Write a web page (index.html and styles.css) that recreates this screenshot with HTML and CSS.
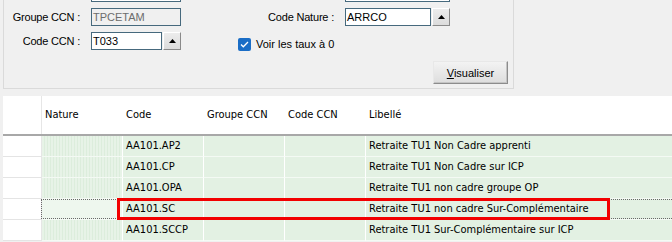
FILE: index.html
```html
<!DOCTYPE html>
<html lang="fr">
<head>
  <meta charset="UTF-8" />
  <title>Natures de cotisation</title>
  <link rel="stylesheet" href="styles.css">
</head>
<body>
  <div class="page">
    <!-- filtres -->
    <section class="panel">
      <div class="form">
        <span class="label"></span>
        <span class="field"></span>
        <span class="label"></span>
        <span class="field"></span>

        <span class="label">Groupe CCN :</span>
        <span class="field disabled">TPCETAM</span>
        <span class="label">Code Nature :</span>
        <span class="combo">
          <span class="field">ARRCO</span>
          <button class="drop"><svg width="7" height="4" viewBox="0 0 7 4"><polygon points="0,4 7,4 3.5,0" fill="#000"/></svg></button>
        </span>

        <span class="label">Code CCN :</span>
        <span class="combo">
          <span class="field">T033</span>
          <button class="drop"><svg width="7" height="4" viewBox="0 0 7 4"><polygon points="0,4 7,4 3.5,0" fill="#000"/></svg></button>
        </span>
        <label class="check">
          <span class="box"><svg width="9" height="7" viewBox="0 0 9 7"><polyline points="1,3.5 3.3,5.8 8,1" fill="none" stroke="#fff" stroke-width="1.3"/></svg></span>
          Voir les taux à 0
        </label>
      </div>
      <div class="actions">
        <button class="btn"><u>V</u>isualiser</button>
      </div>
    </section>

    <!-- liste -->
    <section class="grid">
      <div class="row head">
        <div class="cell ind"></div>
        <div class="cell">Nature</div>
        <div class="cell">Code</div>
        <div class="cell">Groupe CCN</div>
        <div class="cell">Code CCN</div>
        <div class="cell lib">Libellé</div>
      </div>
      <div class="row">
        <div class="cell ind"></div>
        <div class="cell nat"></div>
        <div class="cell">AA101.AP2</div>
        <div class="cell"></div>
        <div class="cell"></div>
        <div class="cell lib">Retraite TU1 Non Cadre apprenti</div>
      </div>
      <div class="row">
        <div class="cell ind"></div>
        <div class="cell nat"></div>
        <div class="cell">AA101.CP</div>
        <div class="cell"></div>
        <div class="cell"></div>
        <div class="cell lib">Retraite TU1 Non Cadre sur ICP</div>
      </div>
      <div class="row">
        <div class="cell ind"></div>
        <div class="cell nat"></div>
        <div class="cell">AA101.OPA</div>
        <div class="cell"></div>
        <div class="cell"></div>
        <div class="cell lib">Retraite TU1 non cadre groupe OP</div>
      </div>
      <div class="row current">
        <div class="cell ind"></div>
        <div class="cell nat"></div>
        <div class="cell">AA101.SC</div>
        <div class="cell"></div>
        <div class="cell"></div>
        <div class="cell lib">Retraite TU1 non cadre Sur-Complémentaire</div>
        <div class="focus"></div>
        <div class="mark"></div>
      </div>
      <div class="row">
        <div class="cell ind"></div>
        <div class="cell nat"></div>
        <div class="cell">AA101.SCCP</div>
        <div class="cell"></div>
        <div class="cell"></div>
        <div class="cell lib">Retraite TU1 Sur-Complémentaire sur ICP</div>
      </div>
    </section>
  </div>
</body>
</html>
```

FILE: styles.css
```css
/* ===== page ===== */
* {
  box-sizing: border-box;
  margin: 0;
  padding: 0;
}
html, body {
  height: 100%;
  overflow: hidden;
}
body {
  background: #f0f0f0;
  font-family: "Liberation Sans", Arial, sans-serif;
  font-size: 11px;
  color: #000;
}
.page {
  padding-left: 3px;
}

/* ===== panneau de filtres ===== */
.panel {
  width: 511px;
  margin-top: -16px;
  border-left: 1px solid #dadada;
  border-right: 1px solid #dadada;
  border-bottom: 1px solid #dadada;
  padding-bottom: 4px;
}
.form {
  display: grid;
  grid-template-columns: 87px 90px 164px 105px;
  grid-auto-rows: 18px;
  row-gap: 6px;
  align-items: center;
}
.label {
  text-align: right;
  padding-right: 11px;
  white-space: nowrap;
  letter-spacing: -0.2px;
}
.form .label:nth-of-type(3),
.form .label:nth-of-type(4) {
  padding-right: 15px;
}
.field {
  display: block;
  height: 18px;
  line-height: 16px;
  border: 1px solid #46697d;
  background: #fff;
  padding-left: 1px;
  white-space: nowrap;
  overflow: hidden;
}
.field.disabled {
  background: #f0f0f0;
  color: #6d6d6d;
}
.combo {
  display: flex;
  gap: 1px;
}
.combo .field {
  flex: 1;
}
.drop {
  width: 18px;
  height: 18px;
  flex: none;
  display: flex;
  align-items: center;
  justify-content: center;
  background: linear-gradient(#ececec, #dcdcdc);
  border: 1px solid;
  border-color: #fff #8a8a8a #8a8a8a #fff;
}
.check {
  grid-column: 3 / 5;
  display: flex;
  align-items: center;
  gap: 5px;
  padding-left: 57px;
  margin-top: 6px;
  white-space: nowrap;
}
.box {
  width: 13px;
  height: 13px;
  border-radius: 2px;
  background: #1a6dc6;
  display: flex;
  align-items: center;
  justify-content: center;
}
.actions {
  display: flex;
  justify-content: flex-end;
  padding-right: 5px;
  margin-top: 11px;
}
.btn {
  width: 75px;
  height: 23px;
  font-family: inherit;
  font-size: 11px;
  color: #000;
  background: linear-gradient(#f3f3f3, #dddddd);
  border: 1px solid;
  border-color: #e8e8e8 #8c8c8c #8c8c8c #e8e8e8;
  box-shadow: inset -1px -1px 0 #c4c4c4;
}

/* ===== grille ===== */
.grid {
  margin-top: 7px;
  background: #fff;
  font-family: "DejaVu Sans Condensed", "DejaVu Sans", sans-serif;
  font-stretch: condensed;
  font-size: 11px;
  color: #000;
}
.row {
  position: relative;
  display: flex;
  height: 21px;
}
.cell {
  width: 81px;
  flex: none;
  padding-left: 3px;
  line-height: 20px;
  white-space: nowrap;
  background: #e3f1e3;
  border-right: 1px solid #fff;
  border-bottom: 1px solid #f4faf4;
}
.cell.ind {
  width: 39px;
  background: #fff;
  border-right: 1px solid #e6e6e6;
  border-bottom: 1px solid #e4e4e4;
}
.cell.nat {
  background: repeating-linear-gradient(90deg, #e7f3e7 0 2px, #dcedDC 2px 3px);
}
.cell.lib {
  flex: 1;
  border-right: none;
}
.row.head {
  height: 40px;
  border-bottom: 2px solid #a8a8a8;
}
.row.head .cell {
  background: #fff;
  line-height: 38px;
  border-bottom: none;
  border-right-color: #fff;
}
.row.head .cell.ind {
  border-right-color: #e6e6e6;
}
.row.current .cell.nat {
  background: #eef7ee;
}

/* cadre de focus de la ligne courante */
.focus {
  position: absolute;
  left: 38px;
  right: -2px;
  top: 0;
  height: 20px;
  border: 1px dotted #6a6a6a;
}
/* encadré rouge d'annotation */
.mark {
  position: absolute;
  left: 114px;
  top: -1px;
  width: 493px;
  height: 22px;
  border: 3px solid #f20000;
}
```
